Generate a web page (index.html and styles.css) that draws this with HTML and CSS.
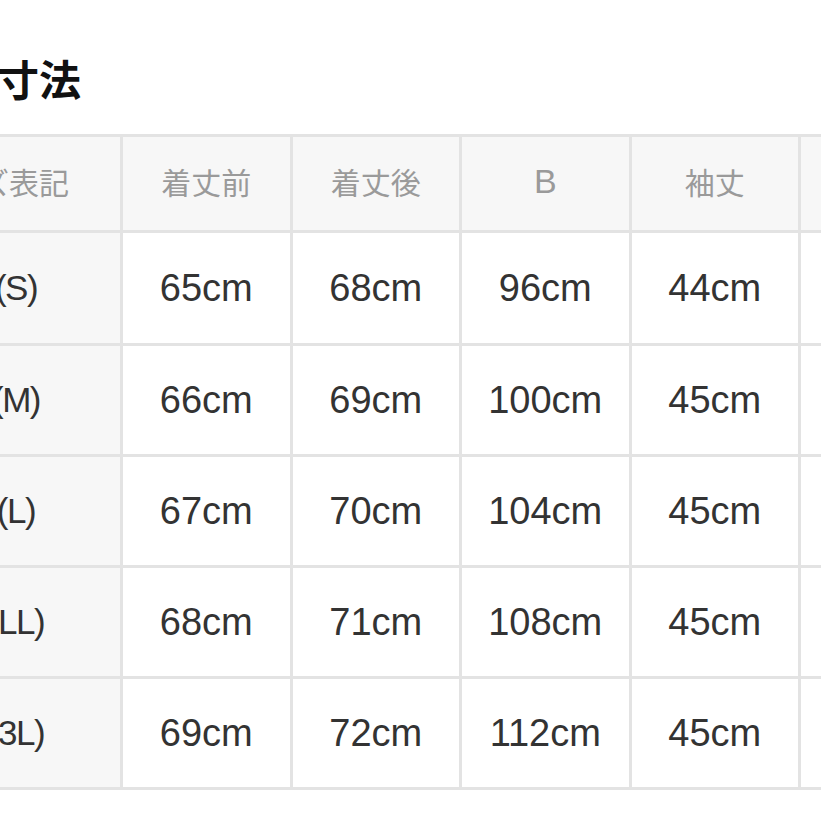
FILE: index.html
```html
<!DOCTYPE html>
<html lang="ja">
<head>
<meta charset="utf-8">
<link rel="stylesheet" href="styles.css">
</head>
<body>
<div class="page">
  <h2 class="title">寸法</h2>
  <div class="table-wrap">
    <div class="grid">
      <div class="cell head first">サイズ表記</div>
      <div class="cell head">着丈前</div>
      <div class="cell head">着丈後</div>
      <div class="cell head latin">B</div>
      <div class="cell head">袖丈</div>
      <div class="cell head">肩幅</div>

      <div class="cell label">1(S)</div>
      <div class="cell">65cm</div>
      <div class="cell">68cm</div>
      <div class="cell">96cm</div>
      <div class="cell">44cm</div>
      <div class="cell">40cm</div>

      <div class="cell label">2(M)</div>
      <div class="cell">66cm</div>
      <div class="cell">69cm</div>
      <div class="cell">100cm</div>
      <div class="cell">45cm</div>
      <div class="cell">41cm</div>

      <div class="cell label">3(L)</div>
      <div class="cell">67cm</div>
      <div class="cell">70cm</div>
      <div class="cell">104cm</div>
      <div class="cell">45cm</div>
      <div class="cell">42cm</div>

      <div class="cell label">4(LL)</div>
      <div class="cell">68cm</div>
      <div class="cell">71cm</div>
      <div class="cell">108cm</div>
      <div class="cell">45cm</div>
      <div class="cell">43cm</div>

      <div class="cell label">5(3L)</div>
      <div class="cell">69cm</div>
      <div class="cell">72cm</div>
      <div class="cell">112cm</div>
      <div class="cell">45cm</div>
      <div class="cell">44cm</div>
    </div>
  </div>
</div>
</body>
</html>
```

FILE: styles.css
```css
html, body {
  margin: 0;
  padding: 0;
  background: #ffffff;
}

.page {
  width: 821px;
  height: 821px;
  overflow: hidden;
  font-family: "Liberation Sans", "Noto Sans CJK JP", sans-serif;
}

.title {
  margin: 57px 0 36px -3px;
  height: 41px;
  font-family: "Noto Sans CJK JP", sans-serif;
  font-size: 42px;
  line-height: 41px;
  font-weight: 700;
  color: #111111;
}

.table-wrap {
  width: 821px;
  overflow: hidden;
}

.grid {
  display: grid;
  grid-template-columns: 223px repeat(5, 166.5px);
  grid-template-rows: 93px 110px 108px 108px 108px 108px;
  gap: 3px;
  padding: 3px;
  background: #e3e3e3;
  margin-left: -106px;
  width: max-content;
}

.cell {
  display: flex;
  align-items: center;
  justify-content: center;
  background: #ffffff;
  color: #333333;
  font-size: 38px;
  white-space: nowrap;
}

.head {
  background: #f7f7f7;
  color: #9a9a9a;
  font-size: 30px;
  padding-bottom: 5px;
}

.head.latin {
  font-size: 34px;
}

.head.first {
  padding-right: 28px;
}

.label {
  background: #f7f7f7;
  font-size: 35px;
  letter-spacing: -1.5px;
  padding-right: 3px;
}
```
